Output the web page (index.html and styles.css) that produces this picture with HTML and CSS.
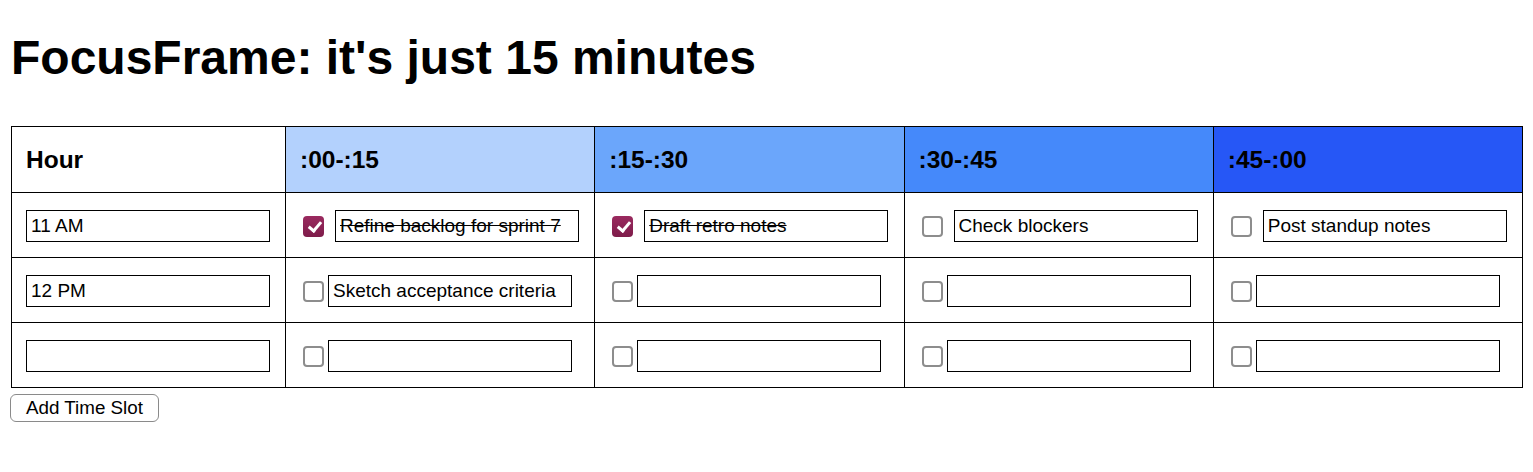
FILE: index.html
```html
<!DOCTYPE html>
<html lang="en">
<head>
<meta charset="utf-8">
<title>FocusFrame</title>
<link rel="stylesheet" href="styles.css">
</head>
<body>
<h1 class="title">FocusFrame: it's just 15 minutes</h1>
<table class="grid">
  <colgroup>
    <col class="col-hour">
    <col><col><col><col>
  </colgroup>
  <thead>
    <tr>
      <th class="h-hour">Hour</th>
      <th class="h-q1">:00-:15</th>
      <th class="h-q2">:15-:30</th>
      <th class="h-q3">:30-:45</th>
      <th class="h-q4">:45-:00</th>
    </tr>
  </thead>
  <tbody>
    <tr class="row-static">
      <td><input class="hour-input" type="text" value="11 AM"></td>
      <td><div class="slot"><input class="check" type="checkbox" checked><input class="task done" type="text" value="Refine backlog for sprint 7"></div></td>
      <td><div class="slot"><input class="check" type="checkbox" checked><input class="task done" type="text" value="Draft retro notes"></div></td>
      <td><div class="slot"><input class="check" type="checkbox"><input class="task" type="text" value="Check blockers"></div></td>
      <td><div class="slot"><input class="check" type="checkbox"><input class="task" type="text" value="Post standup notes"></div></td>
    </tr>
    <tr>
      <td><input class="hour-input" type="text" value="12 PM"></td>
      <td><div class="slot"><input class="check" type="checkbox"><input class="task" type="text" value="Sketch acceptance criteria"></div></td>
      <td><div class="slot"><input class="check" type="checkbox"><input class="task" type="text" value=""></div></td>
      <td><div class="slot"><input class="check" type="checkbox"><input class="task" type="text" value=""></div></td>
      <td><div class="slot"><input class="check" type="checkbox"><input class="task" type="text" value=""></div></td>
    </tr>
    <tr>
      <td><input class="hour-input" type="text" value=""></td>
      <td><div class="slot"><input class="check" type="checkbox"><input class="task" type="text" value=""></div></td>
      <td><div class="slot"><input class="check" type="checkbox"><input class="task" type="text" value=""></div></td>
      <td><div class="slot"><input class="check" type="checkbox"><input class="task" type="text" value=""></div></td>
      <td><div class="slot"><input class="check" type="checkbox"><input class="task" type="text" value=""></div></td>
    </tr>
  </tbody>
</table>
<button class="add-btn" type="button">Add Time Slot</button>
</body>
</html>
```
FILE: styles.css
```css
html, body {
  background: #ffffff;
}
body {
  margin: 10px;
  font-family: "Liberation Sans", Arial, Helvetica, sans-serif;
  color: #000;
}
.title {
  font-size: 48px;
  font-weight: bold;
  line-height: 54px;
  margin: 21px 0 41px 1px;
}
.grid {
  width: calc(100% - 1px);
  margin-left: 1px;
  border-collapse: collapse;
  table-layout: fixed;
  border: 1px solid #000;
}
.col-hour {
  width: 274px;
}
.grid th,
.grid td {
  border: 1px solid #000;
}
.grid th {
  text-align: left;
  font-size: 24.5px;
  font-weight: bold;
  line-height: 28px;
  padding: 19px 14px 18px;
}
.grid td {
  padding: 17px 14px 15px;
  height: 32px;
  vertical-align: middle;
}
.h-hour { background: #ffffff; }
.h-q1 { background: #b3d1fd; }
.h-q2 { background: #6ba6fb; }
.h-q3 { background: #4589fa; }
.h-q4 { background: #2657f6; }

.slot {
  display: flex;
  align-items: center;
  height: 32px;
}
.hour-input,
.task {
  box-sizing: border-box;
  width: 244px;
  height: 32px;
  border: 1px solid #000;
  border-radius: 0;
  padding: 0 4px;
  margin: 0;
  font-family: "Liberation Sans", Arial, Helvetica, sans-serif;
  font-size: 19px;
  color: #000;
  background: #fff;
  outline: none;
  display: block;
}
.task {
  margin-left: 4px;
}
.row-static .task {
  margin-left: 11px;
}
.task.done {
  text-decoration: line-through;
}
.check {
  appearance: none;
  -webkit-appearance: none;
  box-sizing: border-box;
  width: 21px;
  height: 21px;
  margin: 0 0 0 3px;
  border: 2px solid #8d8d8d;
  border-radius: 4px;
  background: #fff;
  flex: none;
  position: relative;
}
.check:checked {
  border: none;
  background: linear-gradient(#9a2a5f, #7e1c4a);
}
.check:checked::after {
  content: "";
  position: absolute;
  left: 7.5px;
  top: 3px;
  width: 5px;
  height: 10px;
  border: solid #fff;
  border-width: 0 3px 3px 0;
  transform: rotate(40deg);
}
.add-btn {
  display: block;
  margin: 6px 0 0 0;
  height: 28px;
  padding: 0 15px;
  font-family: "Liberation Sans", Arial, Helvetica, sans-serif;
  font-size: 18.8px;
  color: #000;
  background: #fff;
  border: 1.5px solid #8a8a8a;
  border-radius: 6px;
}
```
